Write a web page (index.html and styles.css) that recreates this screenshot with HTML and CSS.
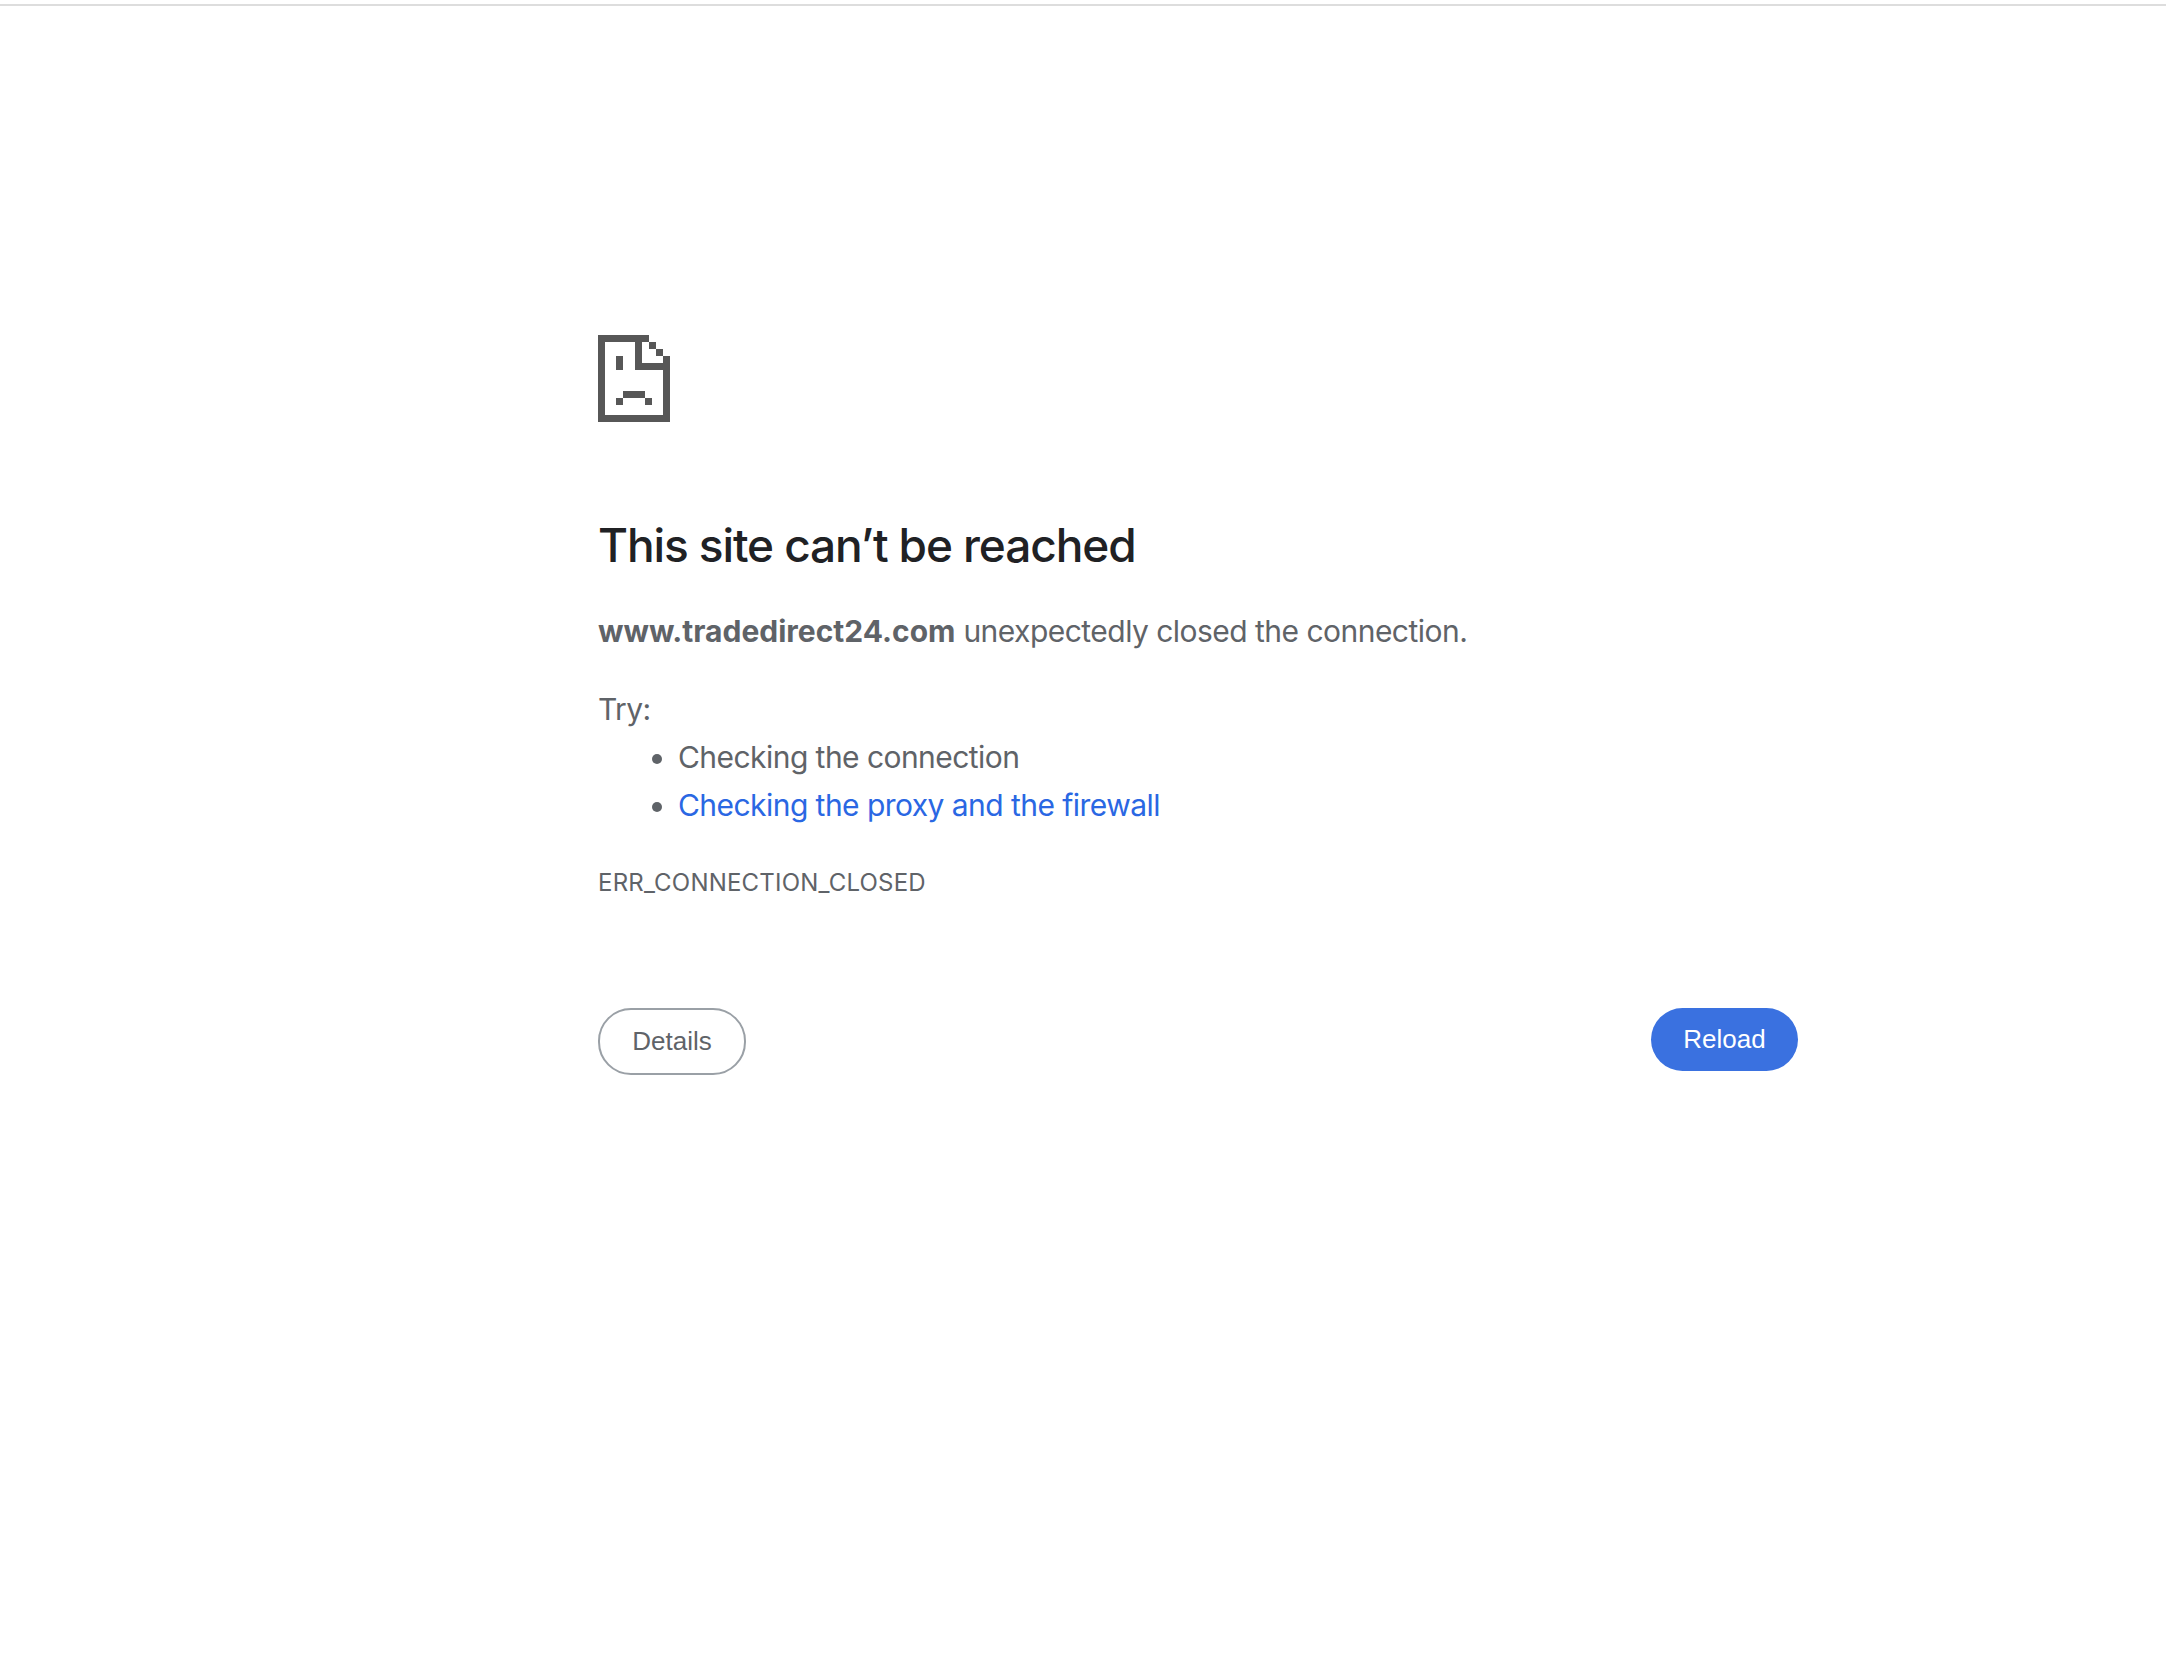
FILE: index.html
```html
<!DOCTYPE html>
<html lang="en">
<head>
<meta charset="utf-8">
<title>This site can't be reached</title>
<link rel="stylesheet" href="styles.css">
</head>
<body>
<div class="topline"></div>
<main class="wrapper">
  <svg class="icon" viewBox="0 0 72 87" width="72" height="87" aria-hidden="true">
    <path d="M0 0H51V7H7V80H65V21H72V87H0Z"/>
    <path d="M37 0H44V28H65V35H37Z"/>
    <path d="M51 7H58V14H51ZM58 14H65V21H58Z"/>
    <path d="M18 21H25V35H18Z"/>
    <path d="M25 56H47V63H25ZM18 63H25V70H18ZM47 63H54V70H47Z"/>
  </svg>
  <h1 class="title">This site can’t be reached</h1>
  <p class="summary"><strong class="host">www.tradedirect24.com</strong> unexpectedly closed the connection.</p>
  <p class="try">Try:</p>
  <ul class="suggestions">
    <li>Checking the connection</li>
    <li><a class="link" href="#">Checking the proxy and the firewall</a></li>
  </ul>
  <div class="code">ERR_CONNECTION_CLOSED</div>
  <div class="buttons">
    <button class="btn details">Details</button>
    <button class="btn reload">Reload</button>
  </div>
</main>
</body>
</html>
```
FILE: styles.css
```css
* { box-sizing: border-box; }
html, body { margin: 0; height: 100%; background: #fff; }
body { font-family: Inter, "Liberation Sans", sans-serif; color: #5f6368; overflow: hidden; }
.topline { height: 2px; margin-top: 4px; background: #dddddd; }
.wrapper { width: 1200px; margin-left: 598px; padding-top: 329px; }
.icon { display: block; fill: #575757; shape-rendering: crispEdges; }
.title { margin: 93px 0 0; font-size: 46px; line-height: 60px; font-weight: 550; color: #202124; letter-spacing: -1.1px; }
.summary { margin: 32px 0 0; font-size: 30px; line-height: 48px; letter-spacing: -0.53px; }
.host { font-weight: 700; letter-spacing: 0; }
.try { margin: 30px 0 0; font-size: 30px; line-height: 48px; letter-spacing: -0.6px; }
.suggestions { margin: 0; padding: 0 0 0 80px; font-size: 30px; line-height: 48px; letter-spacing: -0.55px; }
.link { color: #2a67e3; text-decoration: none; }
.code { margin-top: 38px; font-size: 24px; line-height: 32px; letter-spacing: 0.2px; }
.buttons { display: flex; justify-content: space-between; align-items: flex-start; margin-top: 109px; }
.btn { border-radius: 33px; font-family: "Liberation Sans", Arial, sans-serif; font-size: 26px; padding: 0; }
.details { width: 148px; height: 67px; background: #fff; border: 2px solid #9aa0a6; color: #5f6368; }
.reload { width: 147px; height: 63px; background: #3a71e0; border: 0; color: #fff; }
```
